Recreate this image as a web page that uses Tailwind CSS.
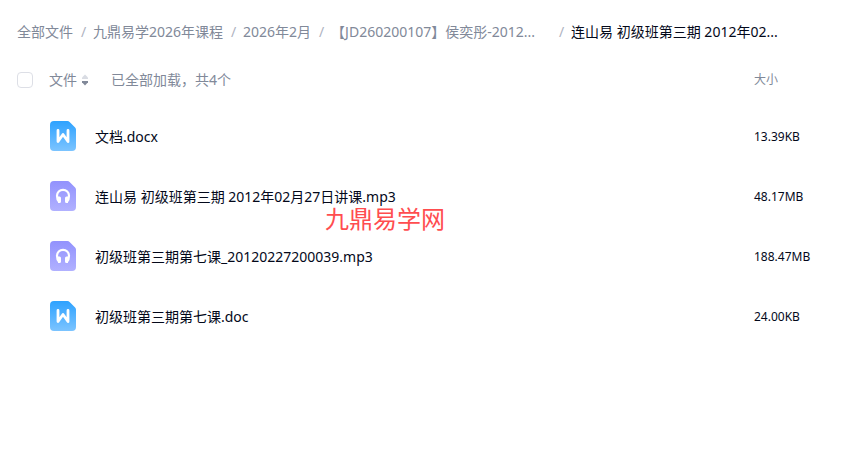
<!DOCTYPE html>
<html lang="zh-CN">
<head>
    <meta charset="UTF-8">
    <meta name="viewport" content="width=device-width, initial-scale=1.0">
    <title>全部文件</title>
    <script src="https://cdn.jsdelivr.net/npm/@tailwindcss/browser@4"></script>
</head>
<body class="bg-white font-['Noto_Sans','Noto_Sans_CJK_SC',sans-serif] text-sm text-[#03081a]">

    <!-- shared file icons -->
    <svg class="absolute size-0" aria-hidden="true">
        <defs>
            <linearGradient id="blue" x1="0" y1="0" x2="0" y2="1">
                <stop offset="0" stop-color="#2ea2ff"/>
                <stop offset="1" stop-color="#7cc4ff"/>
            </linearGradient>
            <linearGradient id="purple" x1="0" y1="0" x2="0" y2="1">
                <stop offset="0" stop-color="#9292fd"/>
                <stop offset="1" stop-color="#b1b1ff"/>
            </linearGradient>
        </defs>
        <symbol id="icon-doc" viewBox="0 0 26 32">
            <path fill="url(#blue)" d="M4 0h13.500a3 3 0 0 1 2.100.900l5.500 5.500a3 3 0 0 1 .900 2.100V26a4 4 0 0 1-4 4H4a4 4 0 0 1-4-4V4a4 4 0 0 1 4-4z"/>
            <path fill="none" stroke="#fff" stroke-width="2.800" stroke-linecap="round" stroke-linejoin="round" d="M8 9.500v11l5-7 5 7v-11"/>
        </symbol>
        <symbol id="icon-audio" viewBox="0 0 26 32">
            <path fill="url(#purple)" d="M4 0h13.500a3 3 0 0 1 2.100.900l5.500 5.500a3 3 0 0 1 .900 2.100V26a4 4 0 0 1-4 4H4a4 4 0 0 1-4-4V4a4 4 0 0 1 4-4z"/>
            <path fill="none" stroke="#fff" stroke-width="2.200" stroke-linecap="round" stroke-linejoin="round" d="M9 20.800C7.700 19.500 7 17 7 14.800a6 6 0 0 1 12 0c0 2.200-.700 4.700-2 6"/>
            <path fill="#fff" d="M8 15.500h1.500a1.500 1.500 0 0 1 1.500 1.500v3.500a1.500 1.500 0 0 1-1.500 1.500H8zM18 15.500h-1.500A1.500 1.500 0 0 0 15 17v3.500a1.500 1.500 0 0 0 1.500 1.500H18z"/>
        </symbol>
    </svg>

    <main class="relative">
        <nav class="px-[17px] pt-[22px] pb-[11px]" aria-label="路径">
            <ol class="flex items-center gap-2 leading-5 whitespace-nowrap text-[#818999]">
                <li><a href="#">全部文件</a></li>
                <li class="w-1 text-[#afb3bf]" aria-hidden="true">/</li>
                <li><a href="#">九鼎易学2026年课程</a></li>
                <li class="w-1 text-[#afb3bf]" aria-hidden="true">/</li>
                <li><a href="#">2026年2月</a></li>
                <li class="w-1 text-[#afb3bf]" aria-hidden="true">/</li>
                <li class="w-[220px]"><a href="#">【JD260200107】侯奕彤-2012...</a></li>
                <li class="w-1 text-[#afb3bf]" aria-hidden="true">/</li>
                <li class="text-[#03081a]" aria-current="page">连山易 初级班第三期 2012年02...</li>
            </ol>
        </nav>

        <table class="w-full table-fixed text-left">
            <thead class="text-[#818999]">
                <tr class="h-[54px]">
                    <th class="w-[49px] pl-[17px] font-normal">
                        <input type="checkbox" aria-label="全选" class="block size-4 appearance-none rounded border border-[#dddfe6] bg-white">
                    </th>
                    <th class="font-normal">
                        <div class="flex items-center">
                            <button type="button" class="flex items-center gap-1">
                                文件
                                <svg class="h-3 w-2" viewBox="0 0 8 12" aria-hidden="true">
                                    <path fill="#d9dce3" d="M4 .500 7 3.600V5H1V3.600z"/>
                                    <path fill="#818999" d="M1 7h6v1.300L4 11.500 1 8.300z"/>
                                </svg>
                            </button>
                            <span class="ml-[22px]">已全部加载，共4个</span>
                        </div>
                    </th>
                    <th class="w-[99px] text-xs font-normal">大小</th>
                </tr>
            </thead>
            <tbody>
                <tr class="h-[60px]">
                    <td></td>
                    <td>
                        <a href="#" class="flex items-center gap-[19px] pl-px">
                            <svg class="h-8 w-[26px]" aria-hidden="true"><use href="#icon-doc"/></svg>
                            文档.docx
                        </a>
                    </td>
                    <td class="text-xs">13.39KB</td>
                </tr>
                <tr class="h-[60px]">
                    <td></td>
                    <td>
                        <a href="#" class="flex items-center gap-[19px] pl-px">
                            <svg class="h-8 w-[26px]" aria-hidden="true"><use href="#icon-audio"/></svg>
                            连山易 初级班第三期 2012年02月27日讲课.mp3
                        </a>
                    </td>
                    <td class="text-xs">48.17MB</td>
                </tr>
                <tr class="h-[60px]">
                    <td></td>
                    <td>
                        <a href="#" class="flex items-center gap-[19px] pl-px">
                            <svg class="h-8 w-[26px]" aria-hidden="true"><use href="#icon-audio"/></svg>
                            初级班第三期第七课_20120227200039.mp3
                        </a>
                    </td>
                    <td class="text-xs">188.47MB</td>
                </tr>
                <tr class="h-[60px]">
                    <td></td>
                    <td>
                        <a href="#" class="flex items-center gap-[19px] pl-px">
                            <svg class="h-8 w-[26px]" aria-hidden="true"><use href="#icon-doc"/></svg>
                            初级班第三期第七课.doc
                        </a>
                    </td>
                    <td class="text-xs">24.00KB</td>
                </tr>
            </tbody>
        </table>

        <!-- watermark -->
        <p class="pointer-events-none absolute top-[203px] left-[325px] text-2xl text-[#ff4d4f]">九鼎易学网</p>
    </main>

</body>
</html>
